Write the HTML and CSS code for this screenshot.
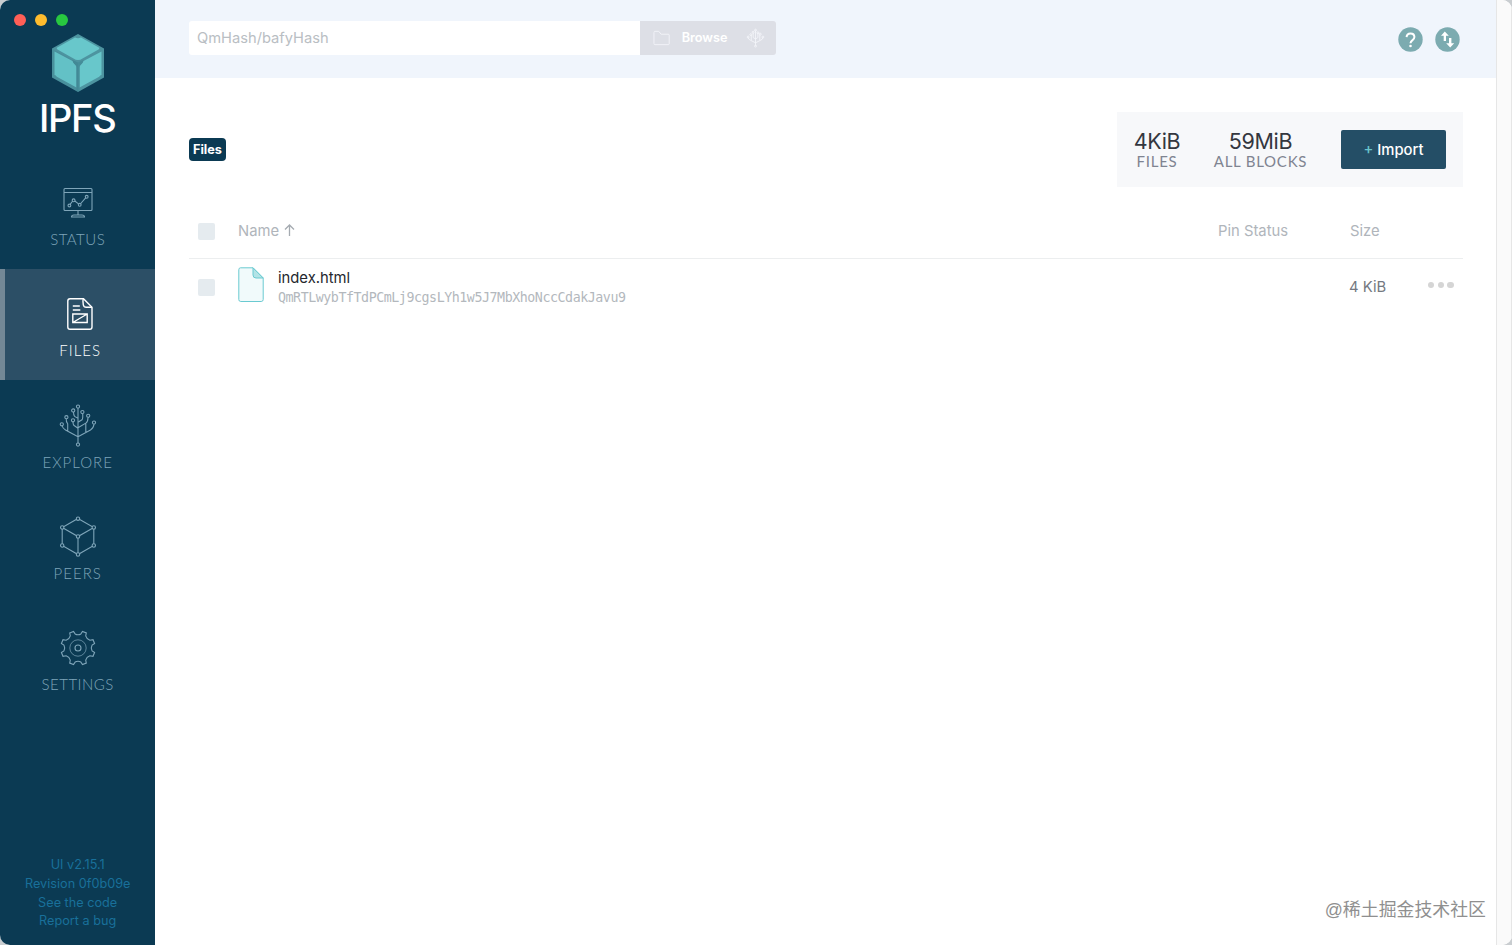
FILE: index.html
```html
<!DOCTYPE html>
<html lang="en">
<head>
    <meta charset="UTF-8">
    <meta name="viewport" content="width=device-width, initial-scale=1.0">
    <title>Files | IPFS</title>
    <link rel="stylesheet" href="styles.css">
</head>
<body>
    <div class="window">
        <aside class="sidebar">
            <div class="traffic-lights">
                <span class="light light-close"></span>
                <span class="light light-minimize"></span>
                <span class="light light-zoom"></span>
            </div>
            <a class="logo" href="#">
                <svg width="52" height="58" viewBox="0 0 52 58">
                    <path fill="#4d94a0" d="M26 0 52 14.500v29L26 58 0 43.500v-29z"/>
                    <path fill="#68c7cb" d="M23 3.500 4.800 13.700Q4.500 15 5.500 15.500L21.500 24.500Q26 27.500 30.500 24.500L46.500 15.500Q47.500 15 47.200 13.700L29 3.500Q26 5 23 3.500zM2.500 17.500v23.500q1.500.2 2.300 1.700L24.500 53.500V33.500Q24.500 31.500 22.500 30 20.800 28.500 20.500 27zM49.500 17.500v23.500q-1.500.2-2.300 1.700L27.500 53.500V33.500Q27.500 31.500 29.500 30 31.200 28.500 31.500 27z"/>
                    <path fill="#458d99" d="M20.500 26 26 28.500 31.500 26Q31 29.500 27.500 32V57h-3V32Q21 29.500 20.500 26z"/>
                    <path fill="#083b54" fill-opacity=".04" d="M0 14.500 26 29v29L0 43.500z"/>
                </svg>
                <span class="logo-text">IPFS</span>
            </a>
            <nav class="nav">
                <a class="nav-item" href="#">
                    <svg class="nav-icon" viewBox="0 0 44 44">
                        <rect x="8" y="7.500" width="28" height="22" rx="1"/>
                        <path d="M8 11.500h28M22 29.500v4.500M15.500 36q0-2 2.500-2h8q2.500 0 2.500 2zM14.300 23.200l2.400-3.200M18.800 20l3.700 2.900M24.700 22.500l5.200-5.800"/>
                        <circle cx="13.400" cy="24.500" r="1.400"/>
                        <circle cx="17.600" cy="19.300" r="1.400"/>
                        <circle cx="23.700" cy="23.800" r="1.400"/>
                        <circle cx="30.700" cy="15.800" r="1.400"/>
                    </svg>
                    <span class="nav-label">STATUS</span>
                </a>
                <a class="nav-item active" href="#">
                    <svg class="nav-icon" viewBox="0 0 44 44">
                        <path d="M12 6.800h13.500L34 15.200V35q0 2.200-2.200 2.200H12Q9.800 37.200 9.800 35V9q0-2.200 2.200-2.200z"/>
                        <path d="M25.300 6.800q-.8 2 0 6 .5 2.400 3 2.400H34M14.800 14h7M14.800 18h7.500M14.800 22h14.400v8.500H14.800zM14.800 30.500 29.200 22"/>
                    </svg>
                    <span class="nav-label wide">FILES</span>
                </a>
                <a class="nav-item" href="#">
                    <svg class="nav-icon" viewBox="0 1.200 44 44">
                        <path d="M22 5.200V40.500M22 34 9.500 27.200Q6.500 25.500 6.200 23M22 34 34.500 27.200Q37.500 25.500 38 21.500M11.700 28.200V21Q10 19.500 10.200 15.500M22 25.500 17.800 22.500Q17 21.500 17 19M22 15.500 18.600 13.600Q17.500 12.500 17.500 9M22 19.500 26 17Q27 16 26.700 11M22 25 29.800 20.300Q32 18.800 32 14.600M29.800 20.300v9.300"/>
                        <g class="node">
                            <circle cx="22" cy="3.800" r="1.600"/>
                            <circle cx="17.200" cy="7.700" r="1.600"/>
                            <circle cx="26.400" cy="9.300" r="1.600"/>
                            <circle cx="32.200" cy="13" r="1.600"/>
                            <circle cx="10.400" cy="14.400" r="1.600"/>
                            <circle cx="17" cy="17.500" r="1.600"/>
                            <circle cx="5.800" cy="21.500" r="1.600"/>
                            <circle cx="38" cy="19.800" r="1.600"/>
                            <circle cx="22" cy="41.800" r="1.600"/>
                        </g>
                    </svg>
                    <span class="nav-label wide">EXPLORE</span>
                </a>
                <a class="nav-item" href="#">
                    <svg class="nav-icon" viewBox="0 0.500 44 44">
                        <path d="M22 4 37.800 13v18L22 40 6.200 31V13zM6.200 13 22 22l15.800-9M22 22v18"/>
                        <g class="node">
                            <circle cx="22" cy="4.200" r="1.700"/>
                            <circle cx="37.800" cy="13" r="1.700"/>
                            <circle cx="37.800" cy="31" r="1.700"/>
                            <circle cx="22" cy="40" r="1.700"/>
                            <circle cx="6.200" cy="31" r="1.700"/>
                            <circle cx="6.200" cy="13" r="1.700"/>
                            <circle cx="22" cy="22" r="1.700"/>
                        </g>
                    </svg>
                    <span class="nav-label wide">PEERS</span>
                </a>
                <a class="nav-item" href="#">
                    <svg class="nav-icon" viewBox="0 0 44 44">
                        <path d="M13.700 6.900 17.500 5.400 19.100 7.900Q22 9.500 24.900 7.900L26.500 5.400 30.300 6.900 29.700 9.900Q30.600 13.100 33.900 14.200L37 13.700 38.600 17.500 36.100 19.100Q34.500 22 36.100 24.900L38.600 26.500 37 30.300 33.900 29.800Q30.600 30.900 29.700 34.100L30.300 37.100 26.500 38.600 24.900 36.100Q22 34.500 19.100 36.100L17.500 38.600 13.700 37.100 14.300 34.100Q13.400 30.900 10.100 29.800L7 30.300 5.400 26.500 7.900 24.900Q9.500 22 7.900 19.100L5.400 17.500 7 13.700 10.100 14.200Q13.400 13.100 14.300 9.900z"/>
                        <circle class="thin" cx="22" cy="22" r="8.200"/>
                        <circle cx="22" cy="22" r="3"/>
                    </svg>
                    <span class="nav-label">SETTINGS</span>
                </a>
            </nav>
            <footer class="sidebar-footer">
                <a href="#">UI v2.15.1</a>
                <a href="#">Revision 0f0b09e</a>
                <a href="#">See the code</a>
                <a href="#">Report a bug</a>
            </footer>
        </aside>

        <div class="content">
            <header class="header">
                <form class="explore-form">
                    <input class="explore-input" type="text" placeholder="QmHash/bafyHash">
                    <button class="browse" type="button">
                        <svg class="folder" width="18" height="16" viewBox="0 0 18 16"><path d="M1 14V2q0-1 1-1h4l2.500 3H16q1 0 1 1v9q0 1-1 1H2q-1 0-1-1z"/></svg>
                        <span>Browse</span>
                        <svg class="tree" width="20" height="20" viewBox="0 0 20 20">
                            <path d="M10 2v16M10 15 4.500 12.300Q2.500 11.500 2.400 9.500M10 15l5.500-2.700q2-.8 2.100-2.800M5.500 12.500V7M14.500 12.500V6.500M10 11 7.500 9.500V4.500M10 11l2.500-1.500V5"/>
                            <circle cx="10" cy="1.800" r="1"/><circle cx="7.500" cy="4" r="1"/><circle cx="12.500" cy="4.500" r="1"/><circle cx="5" cy="6.500" r="1"/><circle cx="15" cy="6" r="1"/><circle cx="2.300" cy="9" r="1"/><circle cx="17.700" cy="9" r="1"/><circle cx="10" cy="18.500" r="1"/>
                        </svg>
                    </button>
                </form>
                <div class="header-icons">
                    <svg width="25" height="25" viewBox="0 0 25 25">
                        <circle cx="12.500" cy="12.500" r="12.200" fill="#7cabb0"/>
                        <path d="M8.600 10.100Q8.700 6.400 12.500 6.400t3.900 3.500q0 1.700-1.900 3.200-2 1.500-2 3.200" fill="none" stroke="#fff" stroke-width="2"/>
                        <circle cx="12.500" cy="19" r="1.300" fill="#fff"/>
                    </svg>
                    <svg width="25" height="25" viewBox="0 0 25 25">
                        <circle cx="12.500" cy="12.500" r="12.200" fill="#7cabb0"/>
                        <path d="M9.800 4.400 13.800 8.700h-2.800v5.400H8.700V8.700H6zM15.200 20.600l4-4.300h-2.800v-5.400H14v5.400h-2.800z" fill="#fff"/>
                    </svg>
                </div>
            </header>

            <main class="main">
                <div class="files-header">
                    <a class="breadcrumb" href="#">Files</a>
                    <div class="stats">
                        <div class="stat stat-files">
                            <span class="stat-value">4KiB</span>
                            <span class="stat-label">FILES</span>
                        </div>
                        <div class="stat stat-blocks">
                            <span class="stat-value">59MiB</span>
                            <span class="stat-label">ALL BLOCKS</span>
                        </div>
                        <button class="import" type="button"><span class="plus">+</span> Import</button>
                    </div>
                </div>

                <div class="files">
                    <div class="row row-head">
                        <span class="checkbox"></span>
                        <span class="sort">Name
                            <svg width="11" height="12" viewBox="0 0 11 12"><path d="M5.500 12V1M1 5.500 5.500 1 10 5.500"/></svg>
                        </span>
                        <span>Pin Status</span>
                        <span>Size</span>
                    </div>
                    <div class="row row-file">
                        <span class="checkbox"></span>
                        <div class="file">
                            <svg width="26" height="36" viewBox="0 0 26 36">
                                <path d="M2.500.8H15L25.200 11v21.500q0 2-2 2H2.800q-2 0-2-2V2.800q0-2 1.700-2z" fill="#f1fafb" stroke="#6acad1"/>
                                <path d="M15 .8 25.200 11H18q-3 0-3-3z" fill="#b3e3e6" stroke="#6acad1"/>
                            </svg>
                            <div class="file-info">
                                <span class="file-name">index.html</span>
                                <span class="file-hash">QmRTLwybTfTdPCmLj9cgsLYh1w5J7MbXhoNccCdakJavu9</span>
                            </div>
                        </div>
                        <span></span>
                        <span class="file-size">4 KiB</span>
                        <span class="dots"><i></i><i></i><i></i></span>
                    </div>
                </div>
            </main>
        </div>
        <div class="scrollbar"></div>
        <div class="watermark" lang="zh">@稀土掘金技术社区</div>
    </div>
</body>
</html>
```

FILE: styles.css
```css
* {
    box-sizing: border-box;
}

body {
    margin: 0;
    background: #c9cdd0;
    font-family: Inter, sans-serif;
    overflow: hidden;
}

a {
    color: inherit;
    text-decoration: none;
}

button {
    border: 0;
    font-family: inherit;
}

.window {
    position: relative;
    display: flex;
    height: 100vh;
    background: #fff;
    border-radius: 10px;
    overflow: hidden;
}

/* Sidebar */
.sidebar {
    width: 155.400px;
    flex: none;
    display: flex;
    flex-direction: column;
    background: #0b3a53;
}

.traffic-lights {
    display: flex;
    gap: 8.500px;
    padding: 13.500px 0 0 13.500px;
}

.light {
    width: 12.500px;
    height: 12.500px;
    border-radius: 50%;
}

.light-close { background: #ff5f57; }
.light-minimize { background: #febc2e; }
.light-zoom { background: #28c840; }

.logo {
    display: flex;
    flex-direction: column;
    align-items: center;
    height: 131.500px;
    padding-top: 8px;
}

.logo svg {
    flex: none;
}

.logo-text {
    margin: 3px 1px 0 0;
    color: #fff;
    font-size: 38px;
    font-weight: 500;
    line-height: 46px;
    letter-spacing: -1.300px;
}

.nav-item {
    display: flex;
    flex-direction: column;
    align-items: center;
    height: 111.330px;
    padding-top: 23.500px;
    color: #7fa5b9;
}

.nav-item.active {
    background: #2c4f66;
    border-left: 5px solid #738896;
    color: #fff;
}

.nav-icon {
    width: 44px;
    height: 44px;
    flex: none;
    fill: none;
    stroke: currentColor;
    stroke-width: 1.100;
}

.nav-item.active .nav-icon {
    stroke-width: 1.400;
}

.node {
    fill: #0b3a53;
}

.thin {
    stroke-width: .7;
}

.nav-label {
    margin-top: 4px;
    font-family: Lato, sans-serif;
    font-size: 15px;
    font-weight: 300;
    line-height: 20px;
    letter-spacing: .5px;
}

.nav-label.wide {
    letter-spacing: 1px;
}

.sidebar-footer {
    display: flex;
    flex-direction: column;
    align-items: center;
    margin-top: auto;
    padding-bottom: 14px;
    color: #19709a;
    font-size: 12.700px;
    line-height: 18.700px;
}

/* Header */
.content {
    flex: 1;
    background: #fff;
}

.header {
    display: flex;
    justify-content: space-between;
    height: 78px;
    padding: 21px 36px 0 33.600px;
    background: #f0f5fc;
}

.explore-form {
    display: flex;
    width: 587.500px;
    height: 33.500px;
}

.explore-input {
    flex: 1;
    padding: 0 8px;
    border: 0;
    border-radius: 3px 0 0 3px;
    background: #fff;
    font-family: inherit;
    font-size: 14.700px;
}

.explore-input::placeholder {
    color: #b9bec3;
}

.browse {
    display: flex;
    align-items: center;
    width: 136px;
    padding: 0 11px 0 13px;
    border-radius: 0 3px 3px 0;
    background: #dddfe6;
    color: #fff;
    font-size: 12.700px;
    font-weight: 600;
}

.browse svg {
    fill: none;
    stroke: #f5f6fa;
    stroke-width: .9;
}

.browse span {
    margin: 0 19px 1px 11px;
}

.header-icons {
    display: flex;
    gap: 12.500px;
    padding-top: 6px;
}

/* Files page */
.main {
    padding: 34px 33.500px 0 33.600px;
}

.files-header {
    display: flex;
    align-items: center;
    justify-content: space-between;
    height: 75px;
}

.breadcrumb {
    padding: 0 4px;
    border-radius: 4px;
    background: #0b3a53;
    color: #fff;
    font-size: 12.700px;
    font-weight: 700;
    line-height: 23px;
}

.stats {
    display: flex;
    align-items: center;
    width: 346px;
    height: 75px;
    padding: 0 16.500px 0 17px;
    background: #f7f8fa;
}

.stat {
    display: flex;
    flex-direction: column;
    align-items: center;
}

.stat-files {
    width: 47px;
    margin-right: 33px;
}

.stat-blocks {
    width: 94px;
}

.stat-value {
    padding-top: 1px;
    color: #34373f;
    font-size: 21.500px;
    line-height: 23px;
    letter-spacing: -.3px;
}

.stat-label {
    margin-top: -1px;
    color: #7f8491;
    font-family: Lato, sans-serif;
    font-size: 15px;
    line-height: 18px;
    letter-spacing: .75px;
    white-space: nowrap;
}

.import {
    width: 105px;
    height: 39px;
    margin-left: auto;
    padding: 0;
    border-radius: 2px;
    background: #244e66;
    color: #fff;
    font-size: 14.800px;
    font-weight: 500;
}

.plus {
    color: #69c4cd;
    font-size: 14.800px;
}

.files {
    margin-top: 17px;
}

.row {
    display: grid;
    grid-template-columns: 40px 980px 132px 78px 26px;
    padding-left: 9px;
}

.row-head {
    align-items: center;
    height: 55px;
    padding-bottom: 1px;
    border-bottom: 1px solid #eceeef;
    color: #b0b5bb;
    font-size: 14.800px;
}

.row-head .checkbox {
    margin-top: 1px;
}

.row-file {
    align-items: center;
    height: 56px;
}

.checkbox {
    width: 17px;
    height: 17px;
    border-radius: 2px;
    background: #e5ebef;
}

.sort svg {
    margin-left: 1px;
    fill: none;
    stroke: #a5abb1;
    stroke-width: 1.300;
}

.file {
    display: flex;
    gap: 14px;
    height: 40px;
}

.file-info {
    display: flex;
    flex-direction: column;
    padding-top: .6px;
}

.file-name {
    color: #24272e;
    font-size: 14.800px;
    line-height: 21px;
}

.file-hash {
    color: #b3b8bd;
    font-family: "DejaVu Sans Mono", monospace;
    font-size: 13.300px;
    line-height: 18px;
    letter-spacing: -.45px;
}

.file-size {
    margin-left: -1px;
    color: #747981;
    font-size: 14.800px;
}

.dots {
    display: flex;
    justify-content: space-between;
    margin-bottom: 4px;
}

.dots i {
    width: 6.500px;
    height: 6.500px;
    border-radius: 50%;
    background: #d5d5d5;
}

.scrollbar {
    width: 16px;
    flex: none;
    border: solid #e6e6e6;
    border-width: 0 1px;
    background: #fafafa;
}

.watermark {
    position: absolute;
    right: 26px;
    bottom: 21px;
    color: #8f8f8f;
    font-family: "Liberation Sans", "Noto Sans CJK SC", sans-serif;
    font-size: 17.900px;
    line-height: 28px;
    text-shadow: 1px 1px 0 #fff;
}
```
